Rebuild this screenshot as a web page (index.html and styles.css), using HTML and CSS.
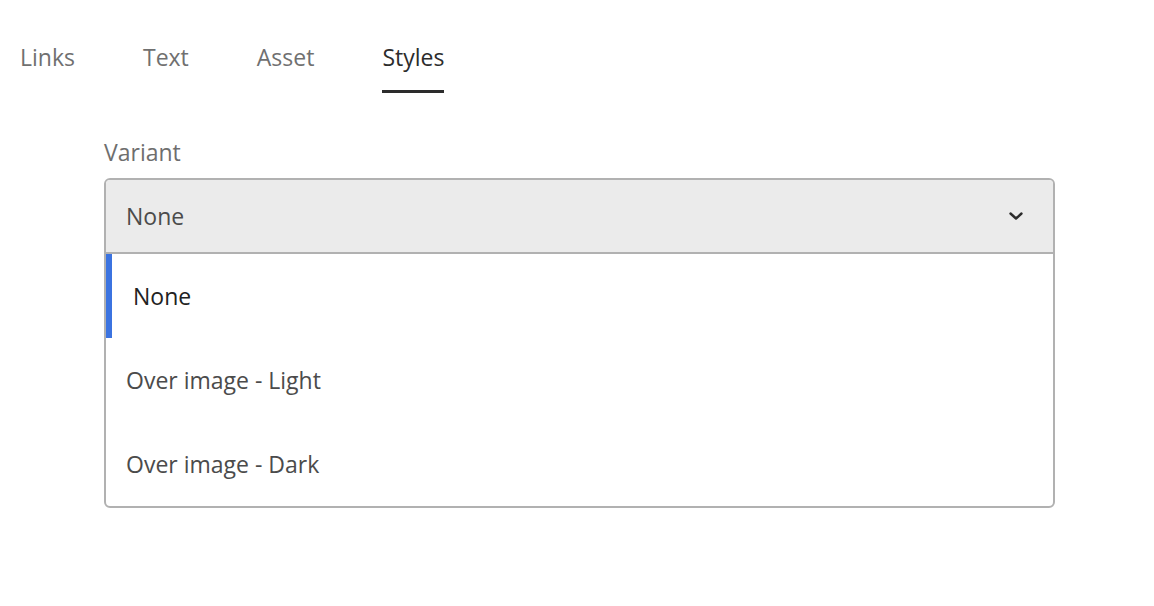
FILE: index.html
```html
<!DOCTYPE html>
<html lang="en">
<head>
<meta charset="utf-8">
<title>Styles</title>
<link rel="stylesheet" href="styles.css">
</head>
<body>
<div class="page">
  <nav class="tabs">
    <div class="tab">Links</div>
    <div class="tab">Text</div>
    <div class="tab">Asset</div>
    <div class="tab active">Styles</div>
  </nav>
  <div class="field">
    <div class="label">Variant</div>
    <div class="picker">
      <div class="picker-head">
        <span class="value">None</span>
        <svg class="chevron" width="14" height="8" viewBox="0 0 14 8"><path d="M1.5 1.5 L7 6.5 L12.5 1.5" fill="none" stroke="#2c2c2c" stroke-width="2.4" stroke-linecap="round" stroke-linejoin="round"/></svg>
      </div>
      <ul class="menu">
        <li class="item selected">None</li>
        <li class="item">Over image - Light</li>
        <li class="item">Over image - Dark</li>
      </ul>
    </div>
  </div>
</div>
</body>
</html>
```

FILE: styles.css
```css
html, body {
  margin: 0;
  padding: 0;
  background: #ffffff;
}
body {
  font-family: "Open Sans", "Noto Sans", sans-serif;
  font-size: 23px;
  line-height: 30px;
}
.page {
  padding-left: 20px;
}
.tabs {
  display: flex;
  gap: 68px;
}
.tab {
  padding: 42px 0 18px;
  border-bottom: 3px solid transparent;
  color: #707070;
}
.tab.active {
  color: #2c2c2c;
  border-bottom-color: #2c2c2c;
}
.field {
  margin: 44px 0 0 84px;
  width: 951px;
}
.label {
  color: #6e6e6e;
  margin-bottom: 11px;
}
.picker {
  border: 2px solid #b1b1b1;
  border-radius: 6px;
  overflow: hidden;
}
.picker-head {
  display: flex;
  align-items: center;
  justify-content: space-between;
  height: 72px;
  padding: 0 30px 0 20px;
  background: #ebebeb;
  border-bottom: 2px solid #b1b1b1;
}
.value {
  color: #4b4b4b;
}
.chevron {
  display: block;
}
.menu {
  list-style: none;
  margin: 0;
  padding: 0;
}
.item {
  display: flex;
  align-items: center;
  height: 84px;
  padding-left: 20px;
  color: #4b4b4b;
}
.item.selected {
  color: #222222;
  padding-left: 21px;
  border-left: 6px solid #3b73e0;
}
```
